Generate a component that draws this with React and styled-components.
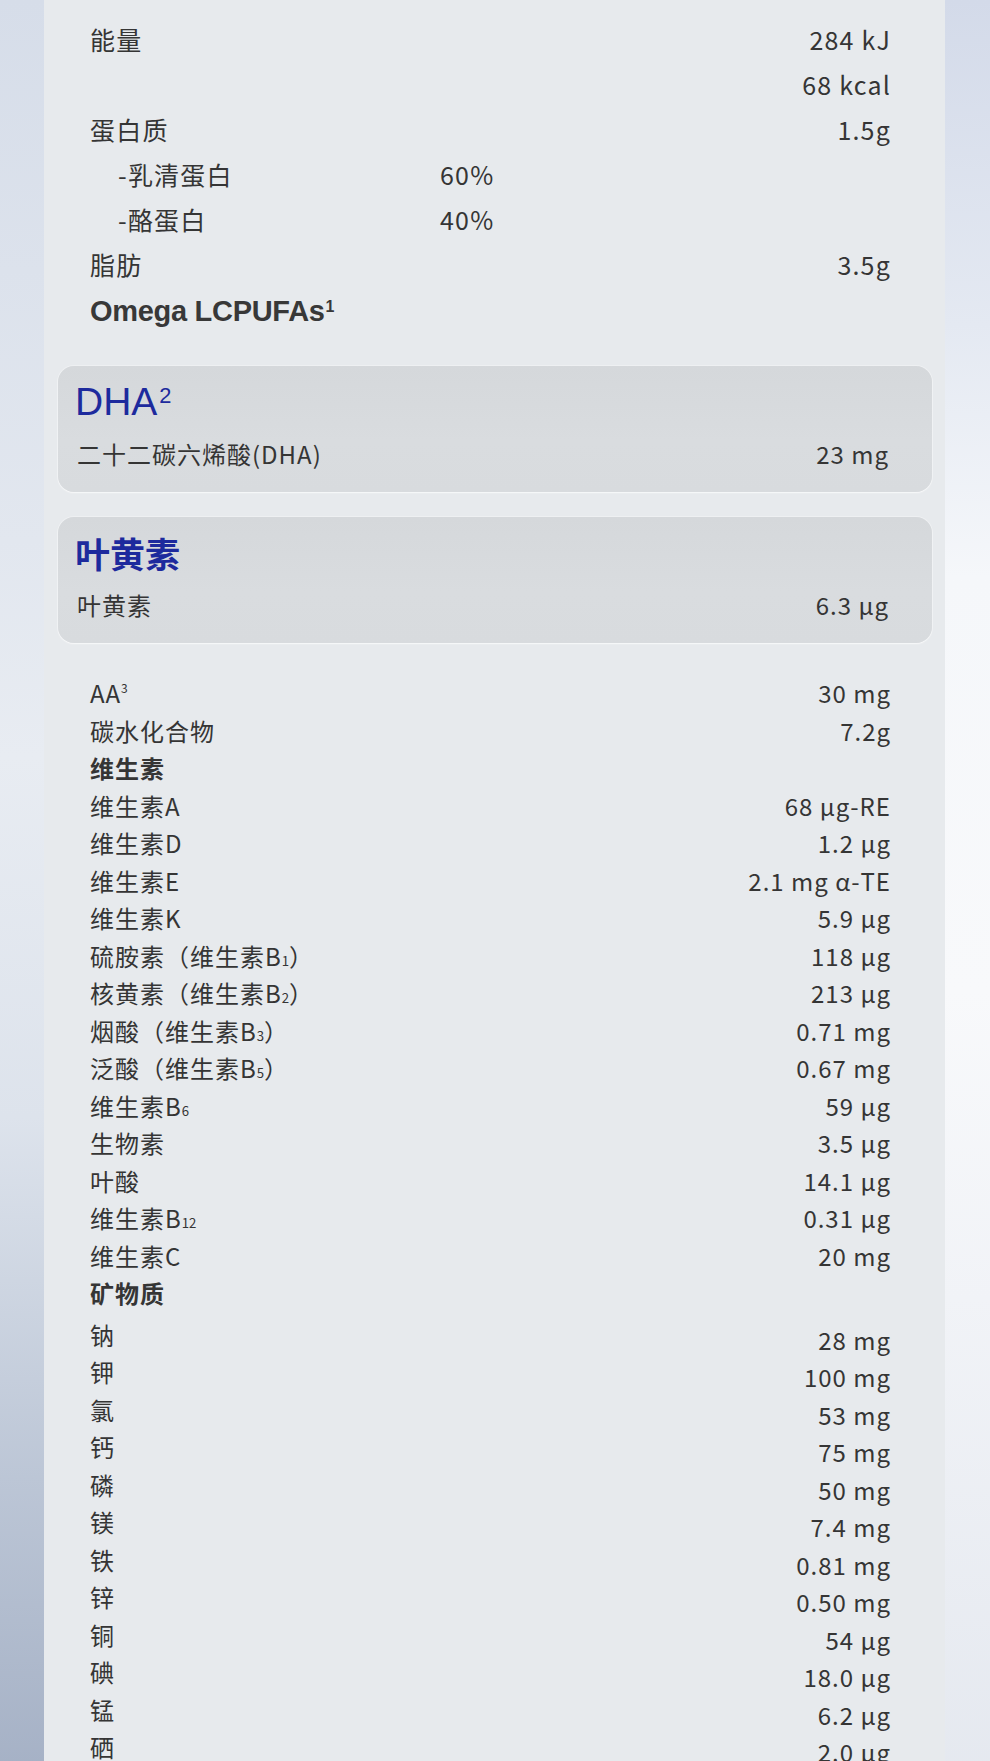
import React from "react";
import styled, { createGlobalStyle } from "styled-components";

const Global = createGlobalStyle`
  html, body { margin: 0; padding: 0; }
  body {
    font-family: "Noto Sans CJK SC", "Noto Sans", sans-serif;
    color: #353535;
    -webkit-font-smoothing: antialiased;
  }
`;

const Page = styled.div`
  min-height: 1761px;
  display: flex;
  padding: 0 45px 0 44px;
  background:
    linear-gradient(to bottom, #d6dde9 0%, #e2e7ef 30%, #e8ecf2 42%, #dde3ec 62%, #bcc6d6 82%, #a3afc4 100%) left top / 44px 100% no-repeat,
    linear-gradient(to bottom, #d3dae9 0%, #e4e9f2 18%, #f5f7fa 32%, #f8f9fb 55%, #f1f3f7 72%, #e4e8ef 100%) right top / 45px 100% no-repeat,
    #e7eaed;
`;

const Panel = styled.main`
  flex: 1;
  background: #e7eaed;
  padding: 16px 13px 40px 14px;
  display: flex;
  flex-direction: column;
`;

const TopList = styled.section`
  padding: 0 42px 0 32px;
  display: flex;
  flex-direction: column;
`;

const TopRow = styled.div`
  display: grid;
  grid-template-columns: 350px 1fr auto;
  align-items: center;
  height: 45px;
  font-size: 25px;
  letter-spacing: 1.2px;
  color: #353535;
`;

const Label = styled.span`
  padding-left: ${(p) => (p.$indent ? "28px" : "0")};
  white-space: nowrap;
`;

const Mid = styled.span`
  white-space: nowrap;
`;

const Value = styled.span`
  justify-self: end;
  white-space: nowrap;
  margin-right: -1px;
  padding-top: ${(p) => (p.$drop ? "10px" : "0")};
`;

const Omega = styled.div`
  margin-top: 3px;
  height: 45px;
  line-height: 45px;
  font-family: "Liberation Sans", Arial, sans-serif;
  font-weight: 700;
  font-size: 29px;
  letter-spacing: -0.3px;
  color: #383838;
  white-space: nowrap;
`;

const Sup = styled.sup`
  font-size: 0.55em;
  vertical-align: 0.55em;
  line-height: 0;
  margin-left: 1px;
`;

const SmallSup = styled.sup`
  font-size: 0.5em;
  vertical-align: 0.85em;
  line-height: 0;
  letter-spacing: 0;
`;

const Sub = styled.span`
  font-size: 0.55em;
  letter-spacing: 0;
  vertical-align: baseline;
`;

const Cards = styled.div`
  display: flex;
  flex-direction: column;
  gap: 25px;
  margin-top: 32px;
`;

const Card = styled.section`
  background: linear-gradient(180deg, #d5d8db 0%, #d9dcdf 60%, #d8dbde 100%);
  border-radius: 16px;
  padding: 14px 43px 16px 17px;
  display: flex;
  flex-direction: column;
  gap: 6px;
  box-shadow: 0 1px 2px rgba(255, 255, 255, 0.6), 0 0 0 1px rgba(255, 255, 255, 0.3);
`;

const CardTitle = styled.h2`
  margin: 0;
  height: 44px;
  line-height: 44px;
  white-space: nowrap;
  color: #1d2a9d;
  font-family: ${(p) =>
    p.$cjk ? '"Noto Sans CJK SC", sans-serif' : '"Liberation Sans", Arial, sans-serif'};
  font-weight: ${(p) => (p.$cjk ? 700 : 400)};
  font-size: ${(p) => (p.$cjk ? "35px" : "39px")};
`;

const TitleSup = styled.sup`
  font-size: 0.56em;
  vertical-align: 0.55em;
  line-height: 0;
  margin-left: 2px;
`;

const CardRow = styled.div`
  height: 46px;
  display: flex;
  align-items: center;
  justify-content: space-between;
  font-size: 24px;
  letter-spacing: 1px;
  color: #353535;
  padding-left: 2px;
`;

const List = styled.section`
  margin-top: 31px;
  padding: 0 42px 0 32px;
  display: flex;
  flex-direction: column;
`;

const Row = styled.div`
  display: grid;
  grid-template-columns: 1fr auto;
  align-items: center;
  height: 37.5px;
  font-size: 24px;
  letter-spacing: 1px;
  color: #353535;
  font-weight: ${(p) => (p.$head ? 700 : 400)};
`;

const vit = [
  [<>AA<SmallSup>3</SmallSup></>, "30 mg"],
  ["碳水化合物", "7.2g"],
  ["维生素", null, true],
  ["维生素A", "68 µg-RE"],
  ["维生素D", "1.2 µg"],
  ["维生素E", "2.1 mg α-TE"],
  ["维生素K", "5.9 µg"],
  [<>硫胺素（维生素B<Sub>1</Sub>）</>, "118 µg"],
  [<>核黄素（维生素B<Sub>2</Sub>）</>, "213 µg"],
  [<>烟酸（维生素B<Sub>3</Sub>）</>, "0.71 mg"],
  [<>泛酸（维生素B<Sub>5</Sub>）</>, "0.67 mg"],
  [<>维生素B<Sub>6</Sub></>, "59 µg"],
  ["生物素", "3.5 µg"],
  ["叶酸", "14.1 µg"],
  [<>维生素B<Sub>12</Sub></>, "0.31 µg"],
  ["维生素C", "20 mg"],
  ["矿物质", null, true],
];

const minerals = [
  ["钠", "28 mg"],
  ["钾", "100 mg"],
  ["氯", "53 mg"],
  ["钙", "75 mg"],
  ["磷", "50 mg"],
  ["镁", "7.4 mg"],
  ["铁", "0.81 mg"],
  ["锌", "0.50 mg"],
  ["铜", "54 µg"],
  ["碘", "18.0 µg"],
  ["锰", "6.2 µg"],
  ["硒", "2.0 µg"],
];

export default function App() {
  return (
    <>
      <Global />
      <Page>
        <Panel>
          <TopList>
            <TopRow>
              <Label>能量</Label>
              <Mid />
              <Value>284 kJ</Value>
            </TopRow>
            <TopRow>
              <Label />
              <Mid />
              <Value>68 kcal</Value>
            </TopRow>
            <TopRow>
              <Label>蛋白质</Label>
              <Mid />
              <Value>1.5g</Value>
            </TopRow>
            <TopRow>
              <Label $indent>-乳清蛋白</Label>
              <Mid>60%</Mid>
              <Value />
            </TopRow>
            <TopRow>
              <Label $indent>-酪蛋白</Label>
              <Mid>40%</Mid>
              <Value />
            </TopRow>
            <TopRow>
              <Label>脂肪</Label>
              <Mid />
              <Value>3.5g</Value>
            </TopRow>
            <Omega>
              Omega LCPUFAs<Sup>1</Sup>
            </Omega>
          </TopList>

          <Cards>
            <Card>
              <CardTitle>
                DHA<TitleSup>2</TitleSup>
              </CardTitle>
              <CardRow>
                <span>二十二碳六烯酸(DHA)</span>
                <span>23 mg</span>
              </CardRow>
            </Card>
            <Card>
              <CardTitle $cjk>叶黄素</CardTitle>
              <CardRow>
                <span>叶黄素</span>
                <span>6.3 µg</span>
              </CardRow>
            </Card>
          </Cards>

          <List>
            {vit.map(([label, value, head], i) => (
              <Row key={i} $head={head}>
                <Label>{label}</Label>
                <Value>{value}</Value>
              </Row>
            ))}
            {minerals.map(([label, value], i) => (
              <Row key={"m" + i}>
                <Label>{label}</Label>
                <Value $drop>{value}</Value>
              </Row>
            ))}
          </List>
        </Panel>
      </Page>
    </>
  );
}
